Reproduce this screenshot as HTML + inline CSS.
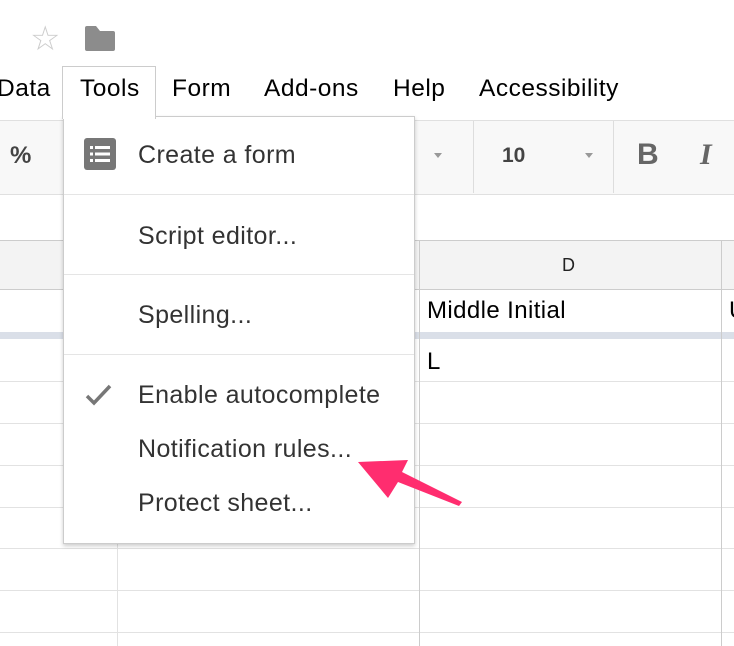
<html><head><style>
body{margin:0;width:734px;height:646px;position:relative;overflow:hidden;background:#fff;font-family:"Liberation Sans",Arial,sans-serif}
div{white-space:nowrap}
.a{position:absolute}
.h{position:absolute;left:0;width:734px;height:1px;background:#e2e2e2}
.v{position:absolute;width:1px;background:#e2e2e2}
.mb{position:absolute;top:75px;font-size:24.5px;color:#000;letter-spacing:0.5px}
.mi{position:absolute;left:138px;font-size:25px;letter-spacing:0.4px;color:#333}
.sep{position:absolute;left:64px;width:350px;height:1px;background:#e5e5e5}
</style></head><body>
<div class="a" style="left:30px;top:22px;font-size:34px;color:#ccc;line-height:34px">☆</div>
<svg class="a" style="left:83px;top:25px" width="34" height="28"><path d="M2 3a2 2 0 0 1 2-2h9l4 5h13a2 2 0 0 1 2 2v16a2 2 0 0 1-2 2H4a2 2 0 0 1-2-2z" fill="#8c8c8c"/></svg>
<div class="mb" style="left:-3px">Data</div>
<div class="a" style="left:62px;top:66px;width:92px;height:52px;border:1px solid #ccc;border-bottom:none;background:#fff;z-index:3"></div>
<div class="mb" style="left:80px;z-index:4">Tools</div>
<div class="mb" style="left:172px">Form</div>
<div class="mb" style="left:264px">Add-ons</div>
<div class="mb" style="left:393px">Help</div>
<div class="mb" style="left:479px">Accessibility</div>
<div class="a" style="left:0;top:120px;width:734px;height:73px;background:#f8f8f8;border-top:1px solid #e0e0e0;border-bottom:1px solid #e0e0e0"></div>
<div class="a" style="left:10px;top:142px;font-size:24px;font-weight:bold;color:#444">%</div>
<div class="v" style="left:473px;top:121px;height:72px;background:#ddd"></div>
<div class="v" style="left:613px;top:121px;height:72px;background:#ddd"></div>
<div class="a" style="left:434px;top:153px;border:4px solid transparent;border-top:5px solid #999"></div>
<div class="a" style="left:585px;top:153px;border:4px solid transparent;border-top:5px solid #999"></div>
<div class="a" style="left:502px;top:144px;font-size:21px;font-weight:bold;color:#444">10</div>
<div class="a" style="left:637px;top:138px;font-size:30px;font-weight:bold;color:#666">B</div>
<div class="a" style="left:700px;top:138px;font-size:30px;font-weight:bold;font-style:italic;color:#666;font-family:'Liberation Serif',serif">I</div>
<div class="a" style="left:0;top:240px;width:734px;height:48px;background:#f3f3f3;border-top:1px solid #ccc;border-bottom:1px solid #ccc"></div>
<div class="a" style="left:562px;top:255px;font-size:18px;color:#222">D</div>
<div class="a" style="left:0;top:332px;width:734px;height:7px;background:#dadfe8"></div>
<div class="h" style="top:381px"></div><div class="h" style="top:423px"></div><div class="h" style="top:465px"></div><div class="h" style="top:507px"></div><div class="h" style="top:548px"></div><div class="h" style="top:590px"></div><div class="h" style="top:632px"></div>
<div class="v" style="left:117px;top:240px;height:406px"></div>
<div class="v" style="left:419px;top:240px;height:406px;background:#ccc"></div>
<div class="v" style="left:721px;top:240px;height:406px;background:#ccc"></div>
<div class="a" style="left:427px;top:297px;font-size:24px;letter-spacing:0.4px;color:#000">Middle Initial</div>
<div class="a" style="left:729px;top:297px;font-size:24px;color:#000">U</div>
<div class="a" style="left:427px;top:348px;font-size:24px;color:#000">L</div>
<div class="a" style="left:63px;top:116px;width:350px;height:426px;background:#fff;border:1px solid #ccc;box-shadow:0 2px 4px rgba(0,0,0,.2);z-index:2"></div>
<div style="position:absolute;left:0;top:0;width:734px;height:646px;z-index:5">
<svg class="a" style="left:84px;top:138px" width="32" height="32"><rect width="32" height="32" rx="3" fill="#777"/><g fill="#fff"><rect x="6" y="8" width="3" height="3"/><rect x="11" y="8" width="15" height="3"/><rect x="6" y="14.5" width="3" height="3"/><rect x="11" y="14.5" width="15" height="3"/><rect x="6" y="21" width="3" height="3"/><rect x="11" y="21" width="15" height="3"/></g></svg>
<div class="mi" style="top:141px">Create a form</div>
<div class="sep" style="top:194px"></div>
<div class="mi" style="top:222px">Script editor...</div>
<div class="sep" style="top:274px"></div>
<div class="mi" style="top:301px">Spelling...</div>
<div class="sep" style="top:354px"></div>
<svg class="a" style="left:84px;top:383px" width="30" height="24"><path d="M3 13l7 7L26 3" stroke="#777" stroke-width="3.5" fill="none"/></svg>
<div class="mi" style="top:381px">Enable autocomplete</div>
<div class="mi" style="top:435px">Notification rules...</div>
<div class="mi" style="top:489px">Protect sheet...</div>
<svg class="a" style="left:350px;top:450px" width="120" height="75"><path d="M8 12L58 10L52 22L112 52L109 56L48 32L38 48Z" fill="#ff2d6f"/></svg>
</div>
</body></html>
